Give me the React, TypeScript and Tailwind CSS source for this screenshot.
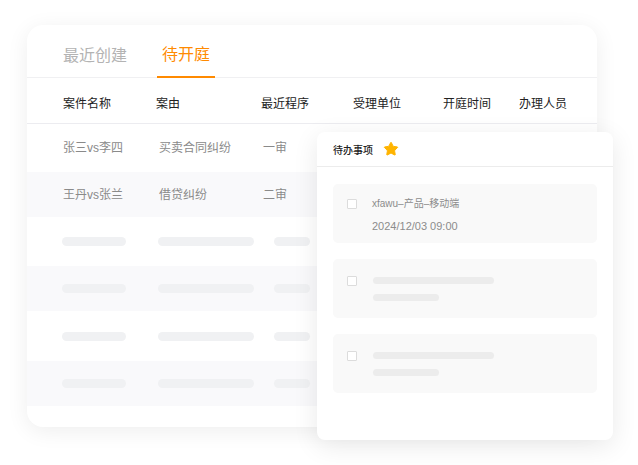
import { Star } from "lucide-react";

const font = { fontFamily: '"Liberation Sans", "Noto Sans CJK SC", sans-serif' };

const headers = ["案件名称", "案由", "最近程序", "受理单位", "开庭时间", "办理人员"];
const colW = ["w-[93px]", "w-[105px]", "w-[92px]", "w-[90px]", "w-[76px]", "w-[70px]"];

const cases = [
  { name: "张三vs李四", reason: "买卖合同纠纷", step: "一审" },
  { name: "王丹vs张兰", reason: "借贷纠纷", step: "二审" },
];

function SkeletonRow({ gray, h }: { gray: boolean; h: string }) {
  return (
    <div className={`flex items-center pl-[35px] ${h} ${gray ? "bg-[#f9f9fb]" : "bg-white"}`}>
      <div className="w-[64px] h-[9px] rounded-full bg-[#f0f1f3]" />
      <div className="ml-[32px] w-[96px] h-[9px] rounded-full bg-[#f0f1f3]" />
      <div className="ml-[20px] w-[36px] h-[9px] rounded-full bg-[#f0f1f3]" />
    </div>
  );
}

function TodoItem({ children }: { children: React.ReactNode }) {
  return (
    <div className="relative h-[59px] rounded-[5px] bg-[#f9f9f9]">
      {children}
    </div>
  );
}

export default function App() {
  return (
    <div className="relative w-[638px] h-[465px] bg-white overflow-hidden" style={font}>
      {/* Case table card */}
      <div className="absolute left-[27px] top-[25px] w-[570px] h-[402px] rounded-2xl bg-white overflow-hidden shadow-[0_4px_22px_rgba(0,0,0,0.07)]">
        <div className="flex h-[53px] items-end pl-[36px] gap-[30px] border-b border-[#f0f0f2]">
          <div className="pb-[13px] text-[16px] leading-none text-[#b3b3b3]">最近创建</div>
          <div className="relative -mb-px px-[5px] pb-[13px] text-[16px] leading-none text-[#ff8a00] border-b-2 border-[#ff8a00]">
            待开庭
          </div>
        </div>

        <div className="flex h-[46px] items-center pl-[36px] pt-[6px] border-b border-[#ececf0] text-[12px] text-[#222]">
          {headers.map((h, i) => (
            <div key={h} className={`${colW[i]} shrink-0`}>{h}</div>
          ))}
        </div>

        {cases.map((c, i) => (
          <div
            key={c.name}
            className={`flex items-center pl-[36px] text-[12px] text-[#8a8a8a] ${i === 0 ? "h-[48px] bg-white" : "h-[45px] bg-[#f9f9fb]"}`}
          >
            <div className="w-[93px] shrink-0">{c.name}</div>
            <div className="w-[105px] shrink-0 pl-[3px]">{c.reason}</div>
            <div className="w-[92px] shrink-0 pl-[2px]">{c.step}</div>
          </div>
        ))}

        <SkeletonRow gray={false} h="h-[49px]" />
        <SkeletonRow gray h="h-[45px]" />
        <SkeletonRow gray={false} h="h-[50px]" />
        <SkeletonRow gray h="h-[45px]" />
      </div>

      {/* Todo card */}
      <div className="absolute left-[317px] top-[132px] w-[296px] h-[308px] rounded-lg bg-white shadow-[0_6px_26px_rgba(0,0,0,0.09)]">
        <div className="flex h-[35px] items-center pl-[16px] border-b border-[#ececec]">
          <span className="text-[10px] font-medium text-[#222]" style={{ fontFamily: '"Noto Sans CJK SC", sans-serif' }}>
            待办事项
          </span>
          <Star className="ml-[10px] w-[16px] h-[16px] text-[#ffb400]" fill="#ffb400" strokeWidth={1.5} />
        </div>

        <div className="flex flex-col gap-[16px] px-[16px] pt-[17px]">
          <TodoItem>
            <div className="absolute left-[14px] top-[15px] w-[10px] h-[10px] border border-[#dcdcdc] rounded-[1px] bg-white" />
            <div className="absolute left-[39px] top-[13px] text-[10px] leading-[14px] text-[#8c8c8c]">xfawu–产品–移动端</div>
            <div className="absolute left-[39px] top-[35px] text-[11px] leading-[14px] text-[#8c8c8c]">2024/12/03 09:00</div>
          </TodoItem>
          {[0, 1].map((k) => (
            <TodoItem key={k}>
              <div className="absolute left-[14px] top-[17px] w-[10px] h-[10px] border border-[#dcdcdc] rounded-[1px] bg-white" />
              <div className="absolute left-[40px] top-[18px] w-[121px] h-[7px] rounded-full bg-[#ececec]" />
              <div className="absolute left-[40px] top-[35px] w-[66px] h-[7px] rounded-full bg-[#ececec]" />
            </TodoItem>
          ))}
        </div>
      </div>
    </div>
  );
}
